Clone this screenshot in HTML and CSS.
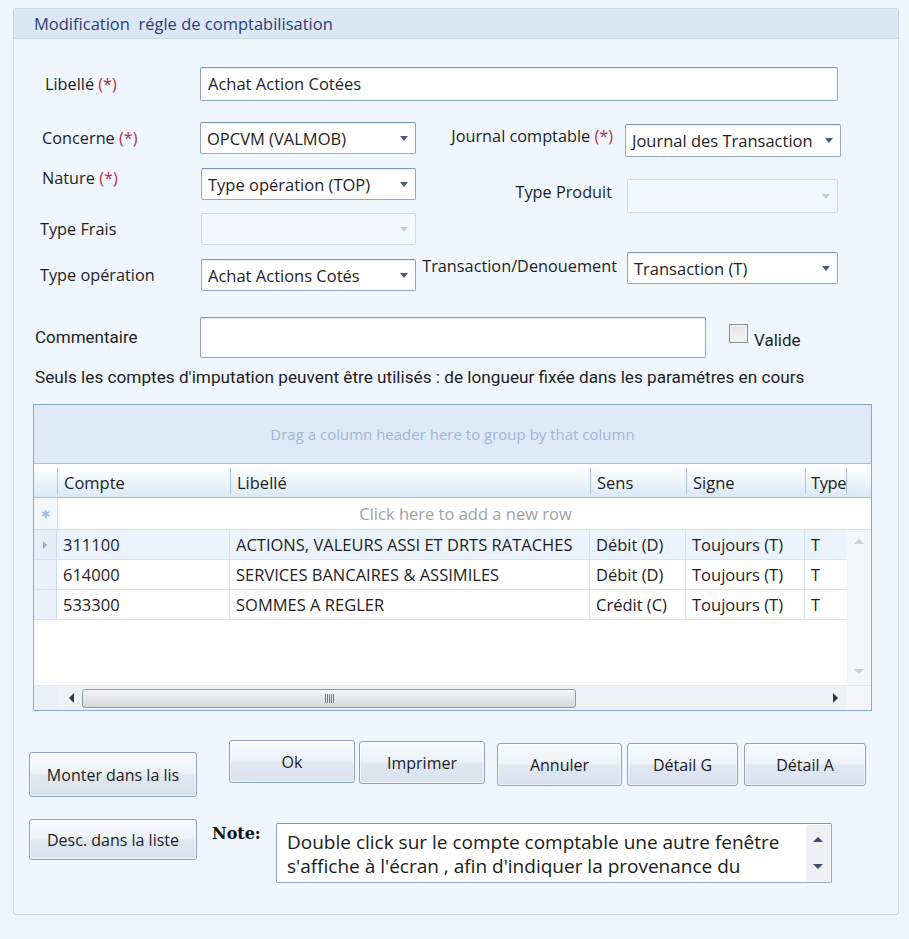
FILE: index.html
```html
<!DOCTYPE html>
<html lang="fr">
<head>
    <meta charset="UTF-8">
    <title>Modification règle de comptabilisation</title>
    <link rel="stylesheet" href="styles.css">
</head>
<body>
    <div class="panel">
        <div class="panel-title">Modification&nbsp; régle de comptabilisation</div>

        <div class="panel-body">
            <div class="row-libelle">
                <span class="lbl">Libellé <span class="req">(*)</span></span>
                <div class="textbox libelle-box">Achat Action Cotées</div>
            </div>

            <div class="columns">
                <div class="col-left">
                    <div class="field f-concerne">
                        <span class="lbl">Concerne <span class="req">(*)</span></span>
                        <div class="combo"><span>OPCVM (VALMOB)</span><i class="arrow"></i></div>
                    </div>
                    <div class="field f-nature">
                        <span class="lbl">Nature <span class="req">(*)</span></span>
                        <div class="combo"><span>Type opération (TOP)</span><i class="arrow"></i></div>
                    </div>
                    <div class="field f-frais">
                        <span class="lbl">Type Frais</span>
                        <div class="combo disabled"><span></span><i class="arrow"></i></div>
                    </div>
                    <div class="field f-typeop">
                        <span class="lbl">Type opération</span>
                        <div class="combo"><span>Achat Actions Cotés</span><i class="arrow"></i></div>
                    </div>
                </div>

                <div class="col-right">
                    <div class="field f-journal">
                        <span class="lbl">Journal comptable <span class="req">(*)</span></span>
                        <div class="combo"><span>Journal des Transaction</span><i class="arrow"></i></div>
                    </div>
                    <div class="field f-produit">
                        <span class="lbl">Type Produit</span>
                        <div class="combo disabled"><span></span><i class="arrow"></i></div>
                    </div>
                    <div class="field f-trans">
                        <span class="lbl">Transaction/Denouement</span>
                        <div class="combo"><span>Transaction (T)</span><i class="arrow"></i></div>
                    </div>
                </div>
            </div>

            <div class="row-comment">
                <span class="lbl narrow">Commentaire</span>
                <div class="textbox comment-box"></div>
                <span class="checkbox"></span>
                <span class="lbl narrow valide">Valide</span>
            </div>

            <p class="info">Seuls les comptes d'imputation peuvent être utilisés : de longueur fixée dans les paramétres en cours</p>

            <div class="grid">
                <div class="group-panel">Drag a column header here to group by that column</div>
                <div class="grid-head">
                    <div class="hcell ind"></div>
                    <div class="hcell">Compte</div>
                    <div class="hcell">Libellé</div>
                    <div class="hcell">Sens</div>
                    <div class="hcell">Signe</div>
                    <div class="hcell last">Type</div>
                    <div class="hcell end"></div>
                </div>
                <div class="new-row">
                    <div class="ind star">&#10033;</div>
                    <div class="new-row-text">Click here to add a new row</div>
                </div>
                <div class="grid-body">
                    <div class="rows">
                        <div class="row selected">
                            <div class="cell ind"><i class="cur"></i></div>
                            <div class="cell">311100</div>
                            <div class="cell">ACTIONS, VALEURS ASSI ET DRTS RATACHES</div>
                            <div class="cell">Débit (D)</div>
                            <div class="cell">Toujours (T)</div>
                            <div class="cell">T</div>
                        </div>
                        <div class="row">
                            <div class="cell ind"></div>
                            <div class="cell">614000</div>
                            <div class="cell">SERVICES BANCAIRES &amp; ASSIMILES</div>
                            <div class="cell">Débit (D)</div>
                            <div class="cell">Toujours (T)</div>
                            <div class="cell">T</div>
                        </div>
                        <div class="row">
                            <div class="cell ind"></div>
                            <div class="cell">533300</div>
                            <div class="cell">SOMMES A REGLER</div>
                            <div class="cell">Crédit (C)</div>
                            <div class="cell">Toujours (T)</div>
                            <div class="cell">T</div>
                        </div>
                    </div>
                    <div class="vscroll">
                        <i class="tri up light"></i>
                        <i class="tri down light"></i>
                    </div>
                </div>
                <div class="hscroll">
                    <div class="hs-ind"></div>
                    <div class="hs-bar">
                        <i class="tri left"></i>
                        <div class="hs-track">
                            <div class="thumb"><span class="grip"></span></div>
                        </div>
                        <i class="tri right"></i>
                    </div>
                    <div class="hs-corner"></div>
                </div>
            </div>

            <div class="bottom">
                <div class="side-buttons">
                    <button class="btn btn-monter">Monter dans la lis</button>
                    <button class="btn btn-desc">Desc. dans la liste</button>
                </div>
                <div class="main-area">
                    <div class="button-row">
                        <button class="btn btn-ok">Ok</button>
                        <button class="btn btn-print">Imprimer</button>
                        <button class="btn btn-cancel">Annuler</button>
                        <button class="btn btn-detg">Détail G</button>
                        <button class="btn btn-deta">Détail A</button>
                    </div>
                    <div class="note-row">
                        <span class="note-lbl">Note:</span>
                        <div class="note-box">
                            <div class="note-text">Double click sur le compte comptable une autre fenêtre s'affiche à l'écran , afin d'indiquer la provenance du</div>
                            <div class="note-scroll">
                                <i class="tri up"></i>
                                <i class="tri down"></i>
                            </div>
                        </div>
                    </div>
                </div>
            </div>
        </div>
    </div>
</body>
</html>
```

FILE: styles.css
```css
body {
    margin: 0;
    padding: 0;
    background-color: #eef5fd;
    font-family: "Open Sans", "Noto Sans", sans-serif;
    font-size: 16.3px;
    color: #1e1e1e;
}

.panel {
    width: 884px;
    margin: 8px 0 0 13px;
    border: 1px solid #c8d5e4;
    border-radius: 3px;
    background-color: #eff6fe;
}

.panel-title {
    height: 29px;
    line-height: 30px;
    padding-left: 20px;
    background-color: #dbe7f5;
    border-bottom: 1px solid #c7d6e8;
    color: #2d3e72;
    font-size: 16.5px;
}

.panel-body {
    padding-bottom: 31px;
}

.lbl {
    white-space: nowrap;
}

.req {
    color: #b8323e;
}

/* text inputs and combos */
.textbox,
.combo {
    box-sizing: border-box;
    background-color: #fff;
    border: 1px solid #8fa8c9;
    border-top-color: #7b95bb;
    border-radius: 2px;
    box-shadow: inset 0 1px 0 #e8eef6;
}

.combo {
    display: flex;
    align-items: center;
    justify-content: space-between;
    padding: 0 7px 0 6px;
    height: 32px;
    font-size: 16.5px;
    white-space: nowrap;
}

.combo .arrow {
    flex: none;
    width: 0;
    height: 0;
    border-left: 4px solid transparent;
    border-right: 4px solid transparent;
    border-top: 5px solid #4c5b79;
}

.combo.disabled {
    background-color: #f4f8fd;
    border-color: #cbdaeb;
    box-shadow: none;
}

.combo.disabled .arrow {
    border-top-color: #c3cfdd;
}

.row-libelle {
    display: flex;
    align-items: center;
    padding: 28px 0 0 31px;
}

.row-libelle .lbl {
    width: 155px;
}

.libelle-box {
    width: 638px;
    height: 34px;
    line-height: 32px;
    padding-left: 7px;
    font-size: 16.5px;
}

.columns {
    display: flex;
    margin-top: 21px;
}

.col-left {
    width: 376px;
    margin-left: 26px;
}

.field {
    display: flex;
    align-items: center;
}

.col-left .lbl {
    width: 160px;
}

.col-left .combo {
    width: 216px;
}

.f-concerne .lbl {
    padding-left: 2px;
    width: 158px;
}

.f-nature {
    margin-top: 14px;
}

.f-nature .lbl {
    align-self: flex-start;
    margin-top: -1px;
    padding-left: 2px;
    width: 159px;
}

.f-nature .combo,
.f-frais .combo,
.f-typeop .combo {
    width: 215px;
}

.f-frais .lbl,
.f-typeop .lbl {
    width: 161px;
}

.f-frais {
    margin-top: 13px;
}

.f-typeop {
    margin-top: 14px;
}

.col-right {
    margin-top: 2px;
}

.col-right .lbl {
    width: 197px;
    text-align: right;
    padding-right: 13px;
}

.f-journal .combo {
    width: 216px;
    height: 33px;
}

.f-journal .lbl {
    padding-right: 12px;
    align-self: flex-start;
    margin-top: 1px;
}

.f-produit {
    margin-top: 22px;
}

.f-produit .lbl {
    width: 196px;
    padding-right: 15px;
    align-self: flex-start;
    margin-top: 2px;
}

.f-produit .combo,
.f-trans .combo {
    width: 211px;
}

.f-produit .combo {
    height: 34px;
}

.f-trans {
    margin-top: 39px;
}

.f-trans .lbl {
    width: 201px;
    padding-right: 10px;
    align-self: flex-start;
    margin-top: 3px;
}

.row-comment {
    display: flex;
    align-items: flex-start;
    margin-top: 26px;
    padding-left: 21px;
}

.narrow {
    font-family: "Roboto", sans-serif;
    font-size: 17px;
}

.row-comment .lbl {
    width: 165px;
    margin-top: 10px;
}

.comment-box {
    width: 506px;
    height: 41px;
}

.checkbox {
    box-sizing: border-box;
    width: 19px;
    height: 19px;
    margin: 7px 0 0 23px;
    border: 1px solid #8e8f8f;
    background: linear-gradient(#e2e3e4, #f7f7f7);
    box-shadow: inset 0 0 0 2px #f1f1f1;
}

.row-comment .valide {
    width: auto;
    margin: 13px 0 0 6px;
}

.info {
    margin: 0;
    padding: 9px 0 0 21px;
    height: 46px;
    box-sizing: border-box;
    font-family: "Roboto", sans-serif;
    font-size: 17.2px;
    white-space: nowrap;
}

/* data grid */
.grid {
    width: 839px;
    box-sizing: border-box;
    margin-left: 19px;
    border: 1px solid #86a8d6;
    background-color: #fff;
}

.group-panel {
    height: 58px;
    display: flex;
    align-items: center;
    justify-content: center;
    background-color: #dfeaf9;
    border-bottom: 1px solid #a3c0e6;
    color: #9fb5d5;
    font-size: 15px;
}

.grid-head {
    display: grid;
    grid-template-columns: 23px 173px 360px 96px 119px 42px 24px;
    height: 33px;
    background: linear-gradient(#ffffff, #f3f8fe 40%, #d9e8f9);
    border-bottom: 1px solid #a3c0e6;
}

.hcell {
    display: flex;
    align-items: center;
    padding-left: 6px;
    border-left: 1px solid #a9c8ee;
    margin: 4px 0;
    padding-top: 3px;
    white-space: nowrap;
    overflow: hidden;
    font-size: 16.5px;
}

.hcell.ind {
    border-left: none;
}

.hcell.last {
    border-right: 1px solid #a9c8ee;
    padding-left: 5px;
    overflow: visible;
    letter-spacing: -0.4px;
}

.hcell.end {
    border-left: none;
}

.new-row {
    display: flex;
    height: 31px;
    border-bottom: 1px solid #c9dcf2;
}

.new-row .ind {
    width: 23px;
    border-right: 1px solid #d2e1f3;
    background-color: #f2f7fd;
}

.star {
    display: flex;
    align-items: center;
    justify-content: center;
    color: #a4bfe2;
    font-size: 11px;
}

.new-row-text {
    flex: 1;
    display: flex;
    align-items: center;
    justify-content: center;
    color: #a2a2a2;
    padding-left: 2px;
    font-size: 16.5px;
}

.grid-body {
    display: flex;
    height: 155px;
}

.rows {
    width: 813px;
}

.row {
    display: grid;
    grid-template-columns: 23px 173px 360px 96px 119px 42px;
    height: 30px;
}

.cell {
    display: flex;
    align-items: center;
    padding-left: 6px;
    border-right: 1px solid #d4e3f4;
    border-bottom: 1px solid #d4e3f4;
    white-space: nowrap;
    overflow: hidden;
    font-size: 16.5px;
}

.cell:last-child {
    border-right: none;
}

.cell.ind {
    padding-left: 0;
    justify-content: center;
    background-color: #eaf1fa;
    border-right-color: #c9dbf0;
}

.row.selected .cell {
    background-color: #ebf3fd;
}

.row.selected .cell.ind {
    background-color: #e4eef9;
}

.cur {
    width: 0;
    height: 0;
    border-top: 4px solid transparent;
    border-bottom: 4px solid transparent;
    border-left: 4px solid #9aaabb;
}

/* scroll bars */
.tri {
    display: block;
    width: 0;
    height: 0;
}

.tri.up {
    border-left: 5px solid transparent;
    border-right: 5px solid transparent;
    border-bottom: 5px solid #3f4b64;
}

.tri.down {
    border-left: 5px solid transparent;
    border-right: 5px solid transparent;
    border-top: 5px solid #3f4b64;
}

.tri.left {
    border-top: 5px solid transparent;
    border-bottom: 5px solid transparent;
    border-right: 5px solid #2e3848;
}

.tri.right {
    border-top: 5px solid transparent;
    border-bottom: 5px solid transparent;
    border-left: 5px solid #2e3848;
}

.tri.up.light {
    border-bottom-color: #c8ced6;
}

.tri.down.light {
    border-top-color: #c8ced6;
}

.vscroll {
    width: 24px;
    display: flex;
    flex-direction: column;
    align-items: center;
    justify-content: space-between;
    padding: 9px 0 11px;
    box-sizing: border-box;
    background-color: #f4f6f9;
}

.hscroll {
    display: flex;
    height: 24px;
    border-top: 1px solid #e3e8ee;
}

.hs-ind {
    width: 24px;
    background-color: #e9f0f9;
}

.hs-bar {
    width: 789px;
    display: flex;
    align-items: center;
    background-color: #eef1f5;
    padding: 0 9px 0 11px;
    box-sizing: border-box;
}

.hs-track {
    flex: 1;
    padding: 0 7px 0 8px;
}

.thumb {
    width: 494px;
    height: 19px;
    box-sizing: border-box;
    border: 1px solid #8e99a8;
    border-radius: 3px;
    background: linear-gradient(#f5f6f8, #e4e7eb 50%, #d3d8de);
    display: flex;
    align-items: center;
    justify-content: center;
}

.grip {
    width: 9px;
    height: 9px;
    background: repeating-linear-gradient(90deg, #707a88 0 1px, transparent 1px 2px);
}

.hs-corner {
    flex: 1;
    background-color: #f4f6f9;
}

/* buttons and note */
.bottom {
    display: flex;
    margin-top: 29px;
}

.btn {
    display: block;
    box-sizing: border-box;
    font-family: "Open Sans", "Noto Sans", sans-serif;
    font-size: 16px;
    color: #1c1c1c;
    border: 1px solid #8ea2bb;
    border-radius: 3px;
    background: linear-gradient(#f8fafd 0%, #eef2f8 48%, #dfe7f1 52%, #d9e2ee 100%);
    box-shadow: inset 0 0 0 1px rgba(255, 255, 255, 0.7);
    padding: 0;
}

.side-buttons {
    width: 168px;
    margin-left: 15px;
}

.btn-monter {
    width: 168px;
    height: 45px;
    margin-top: 12px;
}

.btn-desc {
    width: 168px;
    height: 41px;
    margin-top: 22px;
}

.main-area {
    margin-left: 15px;
}

.button-row {
    display: flex;
    align-items: flex-start;
    padding-left: 17px;
    height: 46px;
}

.button-row .btn {
    height: 43px;
}

.btn-ok {
    width: 126px;
}

.btn-print {
    width: 126px;
    margin: 1px 0 0 4px;
}

.btn-cancel {
    width: 125px;
    margin: 3px 0 0 12px;
}

.btn-detg {
    width: 111px;
    margin: 3px 0 0 5px;
}

.btn-deta {
    width: 122px;
    margin: 3px 0 0 6px;
}

.note-row {
    display: flex;
    align-items: flex-start;
    margin-top: 37px;
}

.note-lbl {
    width: 64px;
    margin-top: 1px;
    font-family: "DejaVu Serif", serif;
    font-weight: bold;
    font-size: 16px;
    color: #111;
}

.note-box {
    width: 556px;
    height: 60px;
    box-sizing: border-box;
    display: flex;
    background-color: #fff;
    border: 1px solid #8fa8c9;
    border-top-color: #7b95bb;
    border-radius: 2px;
}

.note-text {
    flex: 1;
    overflow: hidden;
    padding: 6px 0 0 10px;
    font-size: 19px;
    line-height: 24px;
    color: #1a1a1a;
}

.note-scroll {
    width: 24px;
    margin: 1px;
    display: flex;
    flex-direction: column;
    align-items: center;
    justify-content: space-between;
    padding: 12px 0 12px;
    box-sizing: border-box;
    background-color: #eef0f3;
}
```
